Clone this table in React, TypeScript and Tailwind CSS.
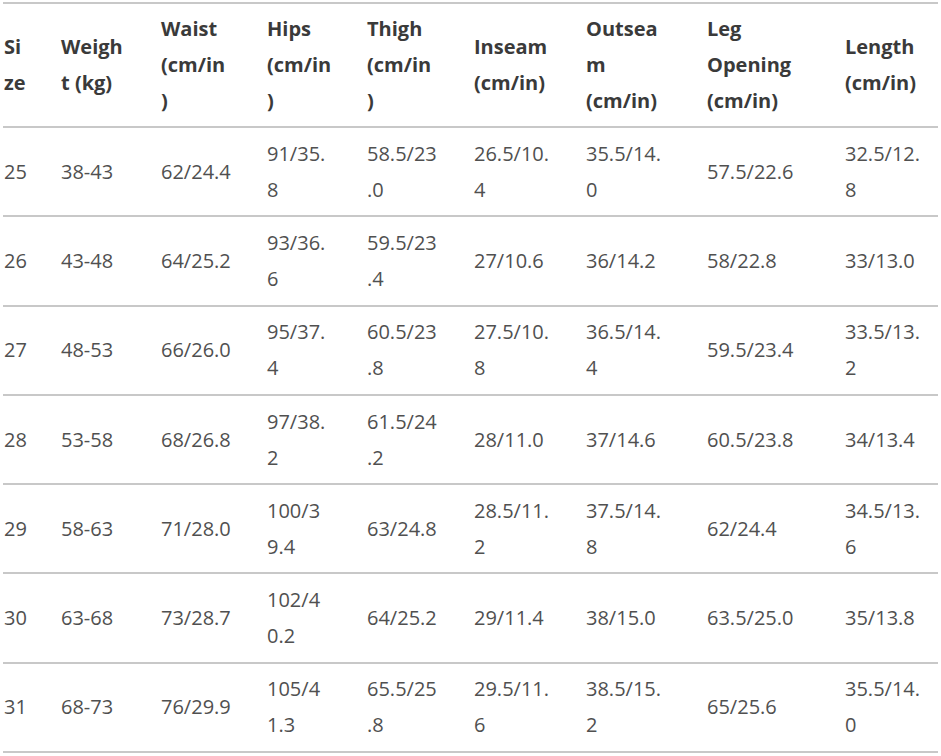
import React from "react";

const widths = [57, 100, 106, 100, 107, 112, 121, 138, 94];

const header = [
  "Si|ze",
  "Weigh|t (kg)",
  "Waist|(cm/in|)",
  "Hips|(cm/in|)",
  "Thigh|(cm/in|)",
  "Inseam|(cm/in)",
  "Outsea|m|(cm/in)",
  "Leg|Opening|(cm/in)",
  "Length|(cm/in)",
];

const rows = [
  ["25", "38-43", "62/24.4", "91/35.|8", "58.5/23|.0", "26.5/10.|4", "35.5/14.|0", "57.5/22.6", "32.5/12.|8"],
  ["26", "43-48", "64/25.2", "93/36.|6", "59.5/23|.4", "27/10.6", "36/14.2", "58/22.8", "33/13.0"],
  ["27", "48-53", "66/26.0", "95/37.|4", "60.5/23|.8", "27.5/10.|8", "36.5/14.|4", "59.5/23.4", "33.5/13.|2"],
  ["28", "53-58", "68/26.8", "97/38.|2", "61.5/24|.2", "28/11.0", "37/14.6", "60.5/23.8", "34/13.4"],
  ["29", "58-63", "71/28.0", "100/3|9.4", "63/24.8", "28.5/11.|2", "37.5/14.|8", "62/24.4", "34.5/13.|6"],
  ["30", "63-68", "73/28.7", "102/4|0.2", "64/25.2", "29/11.4", "38/15.0", "63.5/25.0", "35/13.8"],
  ["31", "68-73", "76/29.9", "105/4|1.3", "65.5/25|.8", "29.5/11.|6", "38.5/15.|2", "65/25.6", "35.5/14.|0"],
];

function Cell({ text, w }: { text: string; w: number }) {
  const lines = text.split("|");
  return (
    <div className="flex shrink-0 flex-col justify-center pl-[1px]" style={{ width: w }}>
      {lines.map((l, i) => (
        <span key={i} className="whitespace-nowrap">
          {l}
        </span>
      ))}
    </div>
  );
}

export default function App() {
  return (
    <div
      className="w-[941px] h-[756px] bg-white overflow-hidden pt-[2px] pl-[3px] text-[20px] leading-[36px]"
      style={{ fontFamily: '"Open Sans", "Noto Sans", sans-serif' }}
    >
      <div className="w-[935px]">
        <div className="flex h-[126px] border-y-2 border-[#c8c8c8] font-bold text-[#3a3a3a]">
          {header.map((h, i) => (
            <Cell key={i} text={h} w={widths[i]} />
          ))}
        </div>
        {rows.map((r, ri) => (
          <div key={ri} className="flex h-[89.3px] border-b-2 border-[#c8c8c8] text-[#505050]">
            {r.map((c, ci) => (
              <Cell key={ci} text={c} w={widths[ci]} />
            ))}
          </div>
        ))}
      </div>
    </div>
  );
}
